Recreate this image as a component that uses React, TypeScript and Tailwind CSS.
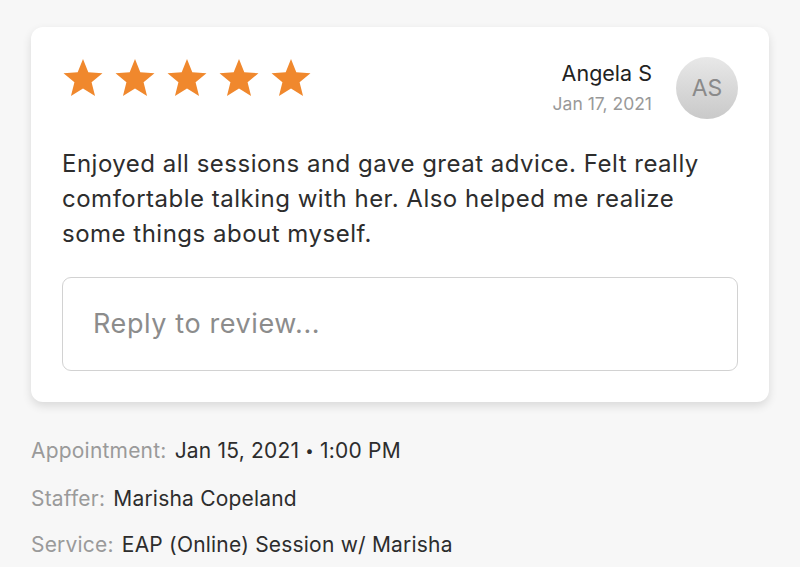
import React from "react";

const Star = () => (
  <svg width="42" height="40" viewBox="0 0 24 23" className="shrink-0">
    <path d="M12 0.6l3.05 7.6 8.15 0.55-6.27 5.2 2 7.95L12 17.55l-6.93 4.35 2-7.95L0.8 8.75l8.15-0.55z" fill="#f0882d" />
  </svg>
);

export default function App() {
  return (
    <div className="min-h-[567px] w-[800px] bg-[#f7f7f7] pt-[27px] px-[31px]" style={{ fontFamily: "Inter, 'Open Sans', sans-serif" }}>
      <div className="rounded-[12px] bg-white shadow-[0_4px_10px_rgba(0,0,0,0.12)] px-[31px] pt-[30px] pb-[31px]">
        <div className="flex items-start justify-between">
          <div className="flex gap-[10px] pt-[1px]">
            <Star /><Star /><Star /><Star /><Star />
          </div>
          <div className="flex items-center gap-[24px]">
            <div className="flex flex-col items-end -mt-[2px]">
              <div className="text-[21.5px] leading-[28px] text-[#222]">Angela S</div>
              <div className="mt-[6px] text-[17.5px] leading-[22px] text-[#999]">Jan 17, 2021</div>
            </div>
            <div className="flex h-[62px] w-[62px] items-center justify-center rounded-full bg-gradient-to-b from-[#e8e8e8] to-[#c9c9c9] text-[23px] text-[#8a8a8a]">
              AS
            </div>
          </div>
        </div>
        <p className="mt-[27px] text-[24px] tracking-[0.5px] leading-[35px] text-[#2d2d2d]">
          Enjoyed all sessions and gave great advice. Felt really comfortable talking with her. Also helped me realize some things about myself.
        </p>
        <div className="mt-[26px] flex h-[94px] items-center rounded-[9px] border border-[#d2d2d2] px-[30px]">
          <span className="text-[27px] tracking-[0.6px] text-[#8c8c8c]">Reply to review...</span>
        </div>
      </div>
      <div className="mt-[34px] flex flex-col gap-[17px] text-[21px] tracking-[0.2px] leading-[29px]">
        <div><span className="text-[#9a9a9a]">Appointment:</span> <span className="ml-[2px] text-[#2d2d2d]">Jan 15, 2021 <span className="relative bottom-[2px] text-[15px]">•</span> 1:00 PM</span></div>
        <div><span className="text-[#9a9a9a]">Staffer:</span> <span className="ml-[2px] text-[#2d2d2d]">Marisha Copeland</span></div>
        <div><span className="text-[#9a9a9a]">Service:</span> <span className="ml-[2px] text-[#2d2d2d]">EAP (Online) Session w/ Marisha</span></div>
      </div>
    </div>
  );
}
